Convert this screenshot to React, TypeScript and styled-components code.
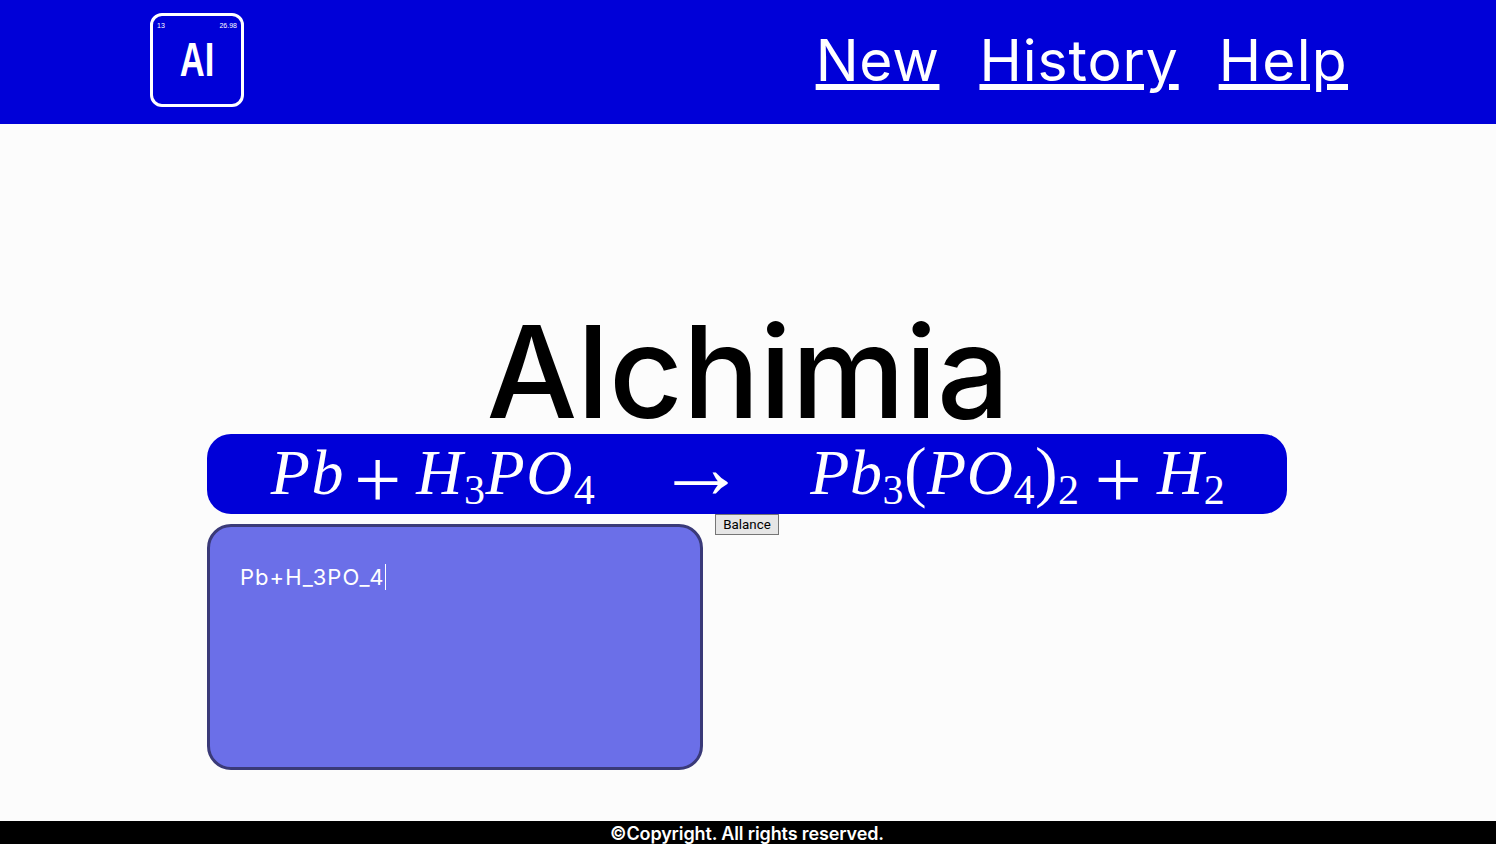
import { createGlobalStyle, styled } from "styled-components";

const GlobalStyle = createGlobalStyle`
  html, body {
    margin: 0;
    padding: 0;
    height: 100%;
    background-color: #fcfcfc;
    font-family: Inter, "Open Sans", sans-serif;
  }
`;

const Page = styled.div`
  display: flex;
  flex-direction: column;
  height: 844px;
  overflow: hidden;
`;

const Header = styled.header`
  display: flex;
  flex: none;
  justify-content: space-between;
  align-items: center;
  height: 124px;
  padding: 0 148px 4px 150px;
  box-sizing: border-box;
  background-color: #0000d8;
`;

const Logo = styled.div`
  position: relative;
  display: flex;
  justify-content: center;
  align-items: center;
  width: 94px;
  height: 94px;
  box-sizing: border-box;
  border: 3px solid #ffffff;
  border-radius: 12px;
  color: #ffffff;
`;

const LogoSymbol = styled.span`
  font-family: "Liberation Sans", sans-serif;
  font-size: 48px;
  font-weight: 700;
  line-height: 1;
  transform: scaleX(0.72);
`;

const LogoNumber = styled.span<{ $side: "left" | "right" }>`
  position: absolute;
  top: 6px;
  ${(props) => props.$side}: 4px;
  font-family: "Liberation Sans", sans-serif;
  font-size: 7px;
  line-height: 1;
`;

const Nav = styled.nav`
  display: flex;
  gap: 40px;
  margin-top: 2px;
`;

const NavLink = styled.a<{ $tracking: number }>`
  color: #ffffff;
  font-size: 57px;
  font-weight: 400;
  letter-spacing: ${(props) => props.$tracking}px;
  line-height: 70px;
  text-decoration: underline;
  text-decoration-thickness: 6px;
  text-underline-offset: 3px;
  cursor: pointer;
`;

const Main = styled.main`
  display: flex;
  flex: 1;
  flex-direction: column;
  align-items: center;
  padding: 182px 2px 0 0;
`;

const Title = styled.h1`
  margin: 0 0 -3px 2px;
  color: #000000;
  font-size: 128px;
  font-weight: 500;
  letter-spacing: -0.2px;
  line-height: 131px;
`;

const Equation = styled.div`
  display: flex;
  justify-content: center;
  align-items: center;
  gap: 61px;
  width: 1080px;
  height: 80px;
  padding: 0 0 3px 2px;
  box-sizing: border-box;
  border-radius: 24px;
  background-color: #0000d8;
  color: #ffffff;
  font-family: "Liberation Serif", serif;
  font-size: 64px;
  line-height: 76px;
  white-space: nowrap;
`;

const Formula = styled.span<{ $tracking: number }>`
  font-style: italic;
  letter-spacing: ${(props) => props.$tracking}px;

  sub {
    font-size: 42px;
    font-style: normal;
    letter-spacing: 0.5px;
    line-height: 0;
    vertical-align: -10px;
  }
`;

const Plus = styled.span<{ $before: number }>`
  margin: 0 15px 0 ${(props) => props.$before}px;
  font-size: 84px;
  font-style: normal;
  letter-spacing: 0;
  line-height: 0;
  vertical-align: -14px;
`;

const Paren = styled.span`
  font-size: 68px;
  font-style: normal;
  line-height: 0;
`;

const Arrow = styled.span`
  margin-right: 3px;
  padding-bottom: 10px;
  font-size: 90px;
  line-height: 76px;
`;

const Workspace = styled.div`
  display: flex;
  align-items: flex-start;
  gap: 12px;
  width: 1080px;
`;

const Editor = styled.div`
  width: 496px;
  height: 246px;
  margin-top: 10px;
  padding: 37px 30px;
  box-sizing: border-box;
  border: 3px solid #3a3a78;
  border-radius: 24px;
  background-color: #6b6fe8;
  color: #ffffff;
  font-size: 22px;
  letter-spacing: 1.05px;
  line-height: 26px;
`;

const Caret = styled.span`
  display: inline-block;
  width: 1px;
  height: 26px;
  background-color: #ffffff;
  vertical-align: top;
`;

const BalanceButton = styled.button`
  width: 64px;
  height: 21px;
  padding: 0;
  border: 1px solid #767676;
  border-radius: 0;
  background-color: #e6e6e6;
  color: #000000;
  font-family: Roboto, sans-serif;
  font-size: 13.33px;
`;

const Footer = styled.footer`
  flex: none;
  height: 23px;
  padding-right: 2px;
  background-color: #000000;
  color: #ffffff;
  font-size: 18px;
  font-weight: 600;
  letter-spacing: -0.13px;
  line-height: 26px;
  text-align: center;
  overflow: hidden;
`;

export default function App() {
  return (
    <>
      <GlobalStyle />
      <Page>
        <Header>
          <Logo>
            <LogoNumber $side="left">13</LogoNumber>
            <LogoNumber $side="right">26.98</LogoNumber>
            <LogoSymbol>AI</LogoSymbol>
          </Logo>
          <Nav>
            <NavLink $tracking={0.67}>New</NavLink>
            <NavLink $tracking={0.9}>History</NavLink>
            <NavLink $tracking={1.25}>Help</NavLink>
          </Nav>
        </Header>
        <Main>
          <Title>Alchimia</Title>
          <Equation>
            <Formula $tracking={1.5}>
              Pb<Plus $before={9}>+</Plus>H<sub>3</sub>PO<sub>4</sub>
            </Formula>
            <Arrow>→</Arrow>
            <Formula $tracking={0.5}>
              Pb<sub>3</sub>
              <Paren>(</Paren>PO<sub>4</sub>
              <Paren>)</Paren>
              <sub>2</sub>
              <Plus $before={15}>+</Plus>H<sub>2</sub>
            </Formula>
          </Equation>
          <Workspace>
            <Editor>
              Pb+H_3PO_4
              <Caret />
            </Editor>
            <BalanceButton>Balance</BalanceButton>
          </Workspace>
        </Main>
        <Footer>©Copyright. All rights reserved.</Footer>
      </Page>
    </>
  );
}
